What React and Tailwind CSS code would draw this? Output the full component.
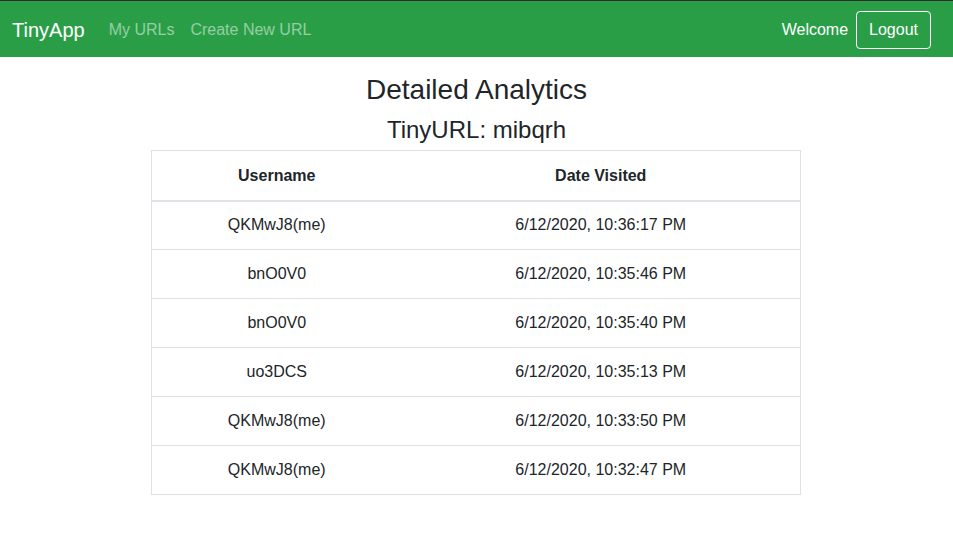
import React from "react";

const visits = [
  { user: "QKMwJ8(me)", date: "6/12/2020, 10:36:17 PM" },
  { user: "bnO0V0", date: "6/12/2020, 10:35:46 PM" },
  { user: "bnO0V0", date: "6/12/2020, 10:35:40 PM" },
  { user: "uo3DCS", date: "6/12/2020, 10:35:13 PM" },
  { user: "QKMwJ8(me)", date: "6/12/2020, 10:33:50 PM" },
  { user: "QKMwJ8(me)", date: "6/12/2020, 10:32:47 PM" },
];

const App = () => {
  return (
    <div className="min-h-screen bg-white text-[#212529] font-['Liberation_Sans',Arial,sans-serif]">
      <nav className="h-[57px] border-t border-[#2b2b2b] bg-[#2a9e47] flex items-center pl-3 pr-[22px] pt-px">
        <a className="text-[20px] text-white mr-4">TinyApp</a>
        <a className="px-2 text-base text-white/50">My URLs</a>
        <a className="px-2 text-base text-white/50">Create New URL</a>
        <div className="ml-auto flex items-center gap-2">
          <span className="text-base text-white">Welcome</span>
          <button className="h-[38px] px-3 border border-white rounded text-base text-white">
            Logout
          </button>
        </div>
      </nav>

      <main className="flex flex-col items-center">
        <h3 className="mt-4 mb-2 text-[28px] leading-[34px] font-medium">
          Detailed Analytics
        </h3>
        <h4 className="mb-[6px] text-[24px] leading-[29px] font-medium">
          TinyURL: mibqrh
        </h4>
        <table className="w-[650px] mr-px border border-[#dee2e6] border-collapse text-base">
          <thead>
            <tr className="h-[50px] border-b-2 border-[#dee2e6]">
              <th className="w-[250px] pt-px font-bold text-center">Username</th>
              <th className="pt-px font-bold text-center">Date Visited</th>
            </tr>
          </thead>
          <tbody>
            {visits.map((v, i) => (
              <tr key={i} className="h-[49px] border-t border-[#dee2e6]">
                <td className="text-center">{v.user}</td>
                <td className="text-center">{v.date}</td>
              </tr>
            ))}
          </tbody>
        </table>
      </main>
    </div>
  );
};

export default App;
